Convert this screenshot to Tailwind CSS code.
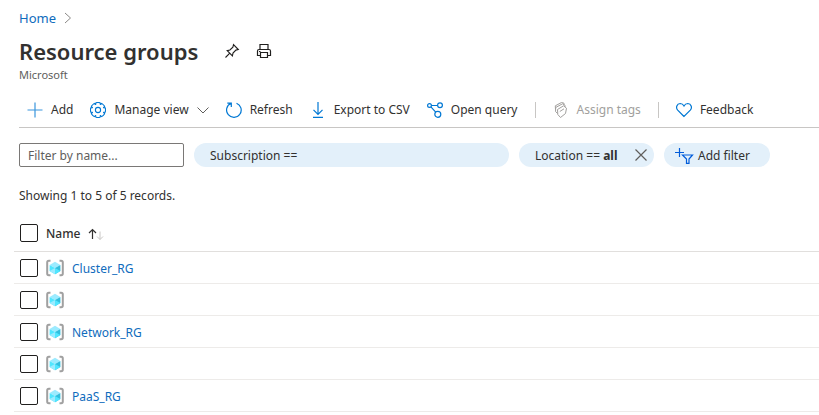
<!DOCTYPE html>
<html lang="en">
<head>
<meta charset="utf-8">
<meta name="viewport" content="width=device-width, initial-scale=1">
<title>Resource groups</title>
<script src="https://cdn.jsdelivr.net/npm/@tailwindcss/browser@4"></script>
</head>
<body class="bg-white font-['Segoe_UI','Noto_Sans',sans-serif] text-xs leading-4 text-[#323130]">
<svg class="hidden" aria-hidden="true">
  <symbol id="group" viewBox="0 0 18 18">
    <path d="M4.500 1.800H2.800Q1.200 1.800 1.200 3.400V14.600Q1.200 16.200 2.800 16.200H4.500M13.500 1.800H15.200Q16.800 1.800 16.800 3.400V14.600Q16.800 16.200 15.200 16.200H13.500" fill="none" stroke="#a0a0a0" stroke-width="2"/>
    <path d="M9 2.800 14.400 5.900 9 9 3.600 5.900Z" fill="#9cebff"/>
    <path d="M3.600 5.900 9 9V15.200L3.600 12.100Z" fill="#50e6ff"/>
    <path d="M14.400 5.900 9 9V15.200L14.400 12.100Z" fill="#32bedd"/>
    <path d="M3.600 12.100 9 9V15.200Z" fill="#9cebff"/>
    <path d="M14.400 12.100 9 9V15.200Z" fill="#50e6ff"/>
  </symbol>
</svg>
<main class="pt-2">
  <header class="pl-[19px]">
    <nav aria-label="Breadcrumb" class="flex items-center gap-2 text-[13px] leading-5">
      <a href="#" class="text-[#0f6cbd]">Home</a>
      <svg class="h-3 w-2" viewBox="0 0 8 12" fill="none" stroke="#8a8886"><path d="M1 1 6.500 6 1 11"/></svg>
    </nav>
    <div class="flex items-center gap-4 pt-2">
      <h1 class="pr-[10px] text-[22px] leading-[30px] font-semibold">Resource groups</h1>
      <button type="button" aria-label="Pin"><svg class="size-4" viewBox="0 0 16 16" fill="none" stroke="#201f1e" stroke-width="1.100"><path d="M1.500 14.500 5.800 10.200M3.200 7.600 8.400 12.800 9 10.100 11.900 7.100 14.300 6.500 9.500 1.700 8.900 4.100 5.900 7Z"/></svg></button>
      <button type="button" aria-label="Print"><svg class="size-4" viewBox="0 0 16 16" fill="none" stroke="#201f1e" stroke-width="1.200"><path d="M4 6.500V1.500H12V6.500M4 12.500H1.500V8Q1.500 6.500 3 6.500H13Q14.500 6.500 14.500 8V12.500H12M4.500 9.500H11.500V14.500H4.500Z"/><path d="M3 8.500H4.500"/></svg></button>
    </div>
    <p class="pt-px text-[11px] leading-4 text-[#605e5c]">Microsoft</p>
  </header>

  <div role="toolbar" aria-label="Commands" class="ml-[19px] mt-2 flex h-[37px] items-center gap-[17px] whitespace-nowrap border-b border-[#c8c6c4] pt-0.5 pl-2">
    <button type="button" class="flex items-center gap-2"><svg class="size-4" viewBox="0 0 16 16" fill="none" stroke="#3a96dd" stroke-width="1.200"><path d="M8 0.500V15.500M0.500 8H15.500"/></svg>Add</button>
    <button type="button" class="flex items-center gap-2"><svg class="size-4" viewBox="0 0 16 16" fill="none" stroke="#0078d4" stroke-width="1.100" stroke-linejoin="round"><path d="M5.900 0.700Q8 0.300 10.100 0.700L10.300 2.500 11.700 1.350Q13.500 2.500 14.650 4.300L13.500 5.700 15.300 5.900Q15.700 8 15.300 10.100L13.500 10.300 14.650 11.700Q13.500 13.500 11.700 14.650L10.300 13.500 10.100 15.300Q8 15.700 5.900 15.300L5.700 13.500 4.300 14.650Q2.500 13.500 1.350 11.700L2.500 10.300 0.700 10.100Q0.300 8 0.700 5.900L2.500 5.700 1.350 4.300Q2.500 2.500 4.300 1.350L5.700 2.500Z"/><circle cx="8" cy="8" r="2.600"/></svg>Manage view<svg class="h-2 w-3" viewBox="0 0 12 8" fill="none" stroke="#605e5c"><path d="M0.500 1.500 6 7 11.500 1.500"/></svg></button>
    <button type="button" class="flex items-center gap-2"><svg class="size-4" viewBox="0 0 16 16" fill="none" stroke="#0078d4" stroke-width="1.200"><path d="M10.500 1.200A7.300 7.300 0 1 1 4.800 1.400M1.300 1.100H5.300V5.100"/></svg>Refresh</button>
    <button type="button" class="flex items-center gap-2"><svg class="size-4" viewBox="0 0 16 16" fill="none" stroke="#0078d4" stroke-width="1.200"><path d="M8 0V12M3.500 7.800 8 12.300 12.500 7.800M3 15.300H13"/></svg>Export to CSV</button>
    <button type="button" class="flex items-center gap-2"><svg class="size-4" viewBox="0 0 16 16" fill="none" stroke="#0078d4" stroke-width="1.200"><circle cx="2.500" cy="3.500" r="1.900"/><circle cx="13" cy="3.200" r="2.400"/><circle cx="10.800" cy="12.300" r="3"/><path d="M4.400 3.500H10.600M3.900 4.900 8.700 10.100"/></svg>Open query</button>
    <span class="h-4 w-px bg-[#c8c6c4]"></span>
    <button type="button" disabled class="flex items-center gap-2 text-[#a19f9d]"><svg class="size-4" viewBox="0 0 16 16" fill="none" stroke="#a19f9d" stroke-linejoin="round"><path d="M4.500 7.500 10.500 3.800 13.500 6.200 12.500 11.500 7.500 15.500 4.800 12.500ZM4.600 11.500 2.500 9.500 2.700 5.500 9.500 1.800 12 3.200V5M2.500 7.500 2.300 3.800 8.500 0.500 11 1.200V2.500M6.800 9.500 11 6.800"/></svg>Assign tags</button>
    <span class="h-4 w-px bg-[#c8c6c4]"></span>
    <button type="button" class="flex items-center gap-2"><svg class="size-4" viewBox="0 0 16 16" fill="none" stroke="#0078d4" stroke-width="1.200"><path d="M8 14.500 1.700 8.200C-0.500 5.800 0.800 1.700 4.200 1.500 6 1.500 7.200 2.500 8 4 8.800 2.500 10 1.500 11.800 1.500 15.200 1.700 16.500 5.800 14.300 8.200Z"/></svg>Feedback</button>
  </div>

  <div class="flex items-center gap-[10px] pt-[15px] pl-[19px] pr-[49px] whitespace-nowrap">
    <input type="text" aria-label="Filter by name" placeholder="Filter by name..." class="h-6 w-[165px] shrink-0 rounded-xs border border-[#7a7876] px-2 placeholder:text-[#605e5c]">
    <button type="button" class="h-6 flex-1 rounded-full bg-[#e3f0fa] px-4 pt-px text-left">Subscription ==</button>
    <div class="flex h-6 w-[135px] items-center justify-between rounded-full bg-[#e3f0fa] pl-4 pr-[7px]"><button type="button" class="pt-px">Location == <b>all</b></button><button type="button" aria-label="Remove location filter"><svg class="size-3" viewBox="0 0 12 12" fill="none" stroke="#605e5c" stroke-width="1.200"><path d="M0.500 0.500 11.500 11.500M11.500 0.500 0.500 11.500"/></svg></button></div>
    <button type="button" class="flex h-6 w-[106px] items-center gap-1 rounded-full bg-[#e3f0fa] pt-px pl-[11px]"><svg class="h-4 w-[19px]" viewBox="0 0 19 16" fill="none" stroke="#015cda" stroke-width="1.200"><path d="M4.500 0V9M0 4.500H9M7.500 7H17.500L14 11V15.300H11.500V11Z"/></svg>Add filter</button>
  </div>

  <p class="pt-[21px] pl-[19px]">Showing 1 to 5 of 5 records.</p>

  <div class="ml-[14px] pt-[11px]">
  <table class="w-full border-collapse text-left">
    <thead>
      <tr class="h-9 border-b border-[#e1dfdd]">
        <th class="w-8 pl-[6px]"><input type="checkbox" aria-label="Select all" class="block size-[18px] appearance-none rounded-xs border border-[#201f1e] checked:bg-[#0078d4]"></th>
        <th colspan="2" class="pt-0.5 font-medium"><button type="button" class="flex items-center gap-2">Name<svg class="h-3 w-4" viewBox="0 0 16 12" fill="none"><path d="M4.500 11V1.500M1 5 4.500 1.500 8 5" stroke="#323130" stroke-width="1.200"/><path d="M12 3.500V11.500M9 8.500 12 11.500 15 8.500" stroke="#c8c6c4"/></svg></button></th>
      </tr>
    </thead>
    <tbody>
      <tr class="h-8 border-b border-[#edebe9]">
        <td class="w-8 pt-px pl-[6px]"><input type="checkbox" aria-label="Select Cluster_RG" class="block size-[18px] appearance-none rounded-xs border border-[#201f1e] checked:bg-[#0078d4]"></td>
        <td class="w-[26px] pt-px"><svg class="h-[18px] w-[18px]"><use href="#group"/></svg></td>
        <td class="pt-1"><a href="#" class="text-[#0f6cbd]">Cluster_RG</a></td>
      </tr>
      <tr class="h-8 border-b border-[#edebe9]">
        <td class="w-8 pt-px pl-[6px]"><input type="checkbox" aria-label="Select row 2" class="block size-[18px] appearance-none rounded-xs border border-[#201f1e] checked:bg-[#0078d4]"></td>
        <td class="w-[26px] pt-px"><svg class="h-[18px] w-[18px]"><use href="#group"/></svg></td>
        <td></td>
      </tr>
      <tr class="h-8 border-b border-[#edebe9]">
        <td class="w-8 pt-px pl-[6px]"><input type="checkbox" aria-label="Select Network_RG" class="block size-[18px] appearance-none rounded-xs border border-[#201f1e] checked:bg-[#0078d4]"></td>
        <td class="w-[26px] pt-px"><svg class="h-[18px] w-[18px]"><use href="#group"/></svg></td>
        <td class="pt-1"><a href="#" class="text-[#0f6cbd]">Network_RG</a></td>
      </tr>
      <tr class="h-8 border-b border-[#edebe9]">
        <td class="w-8 pt-px pl-[6px]"><input type="checkbox" aria-label="Select row 4" class="block size-[18px] appearance-none rounded-xs border border-[#201f1e] checked:bg-[#0078d4]"></td>
        <td class="w-[26px] pt-px"><svg class="h-[18px] w-[18px]"><use href="#group"/></svg></td>
        <td></td>
      </tr>
      <tr class="h-8 border-b border-[#edebe9]">
        <td class="w-8 pt-px pl-[6px]"><input type="checkbox" aria-label="Select PaaS_RG" class="block size-[18px] appearance-none rounded-xs border border-[#201f1e] checked:bg-[#0078d4]"></td>
        <td class="w-[26px] pt-px"><svg class="h-[18px] w-[18px]"><use href="#group"/></svg></td>
        <td class="pt-1"><a href="#" class="text-[#0f6cbd]">PaaS_RG</a></td>
      </tr>
    </tbody>
  </table>
  </div>
</main>
</body>
</html>
